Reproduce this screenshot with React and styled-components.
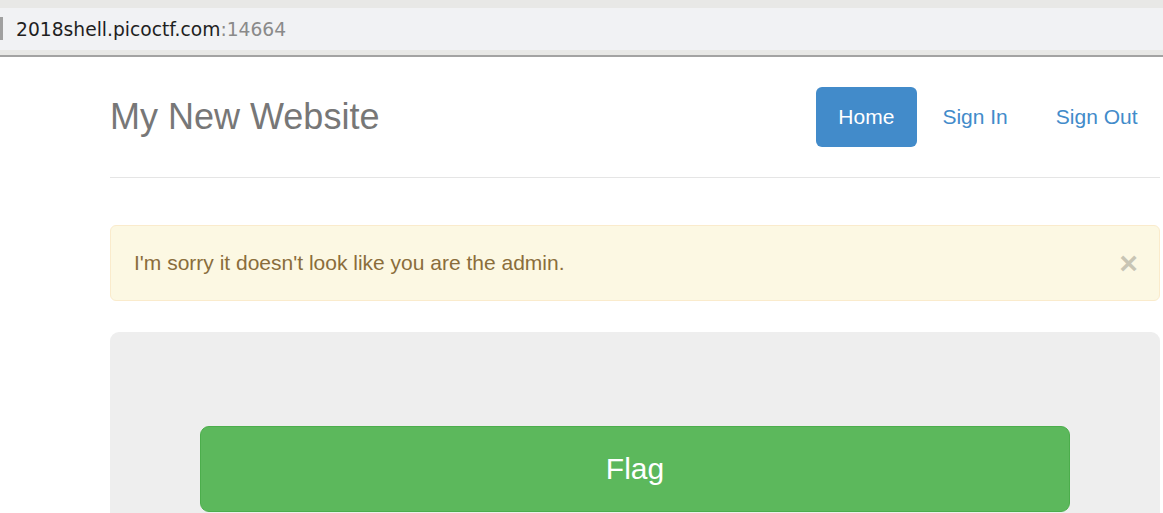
import { styled, createGlobalStyle } from 'styled-components'

const GlobalStyle = createGlobalStyle`
  html, body {
    margin: 0;
    padding: 0;
    background: #fff;
    overflow: hidden;
  }
  body {
    font-family: "Liberation Sans", Arial, sans-serif;
  }
`

const Chrome = styled.div`
  background: #e8e8e6;
  padding: 8px 0 5px;
  border-bottom: 2px solid #a3a3a3;
`

const UrlBar = styled.div`
  position: relative;
  height: 42px;
  background: #f1f2f4;
  display: flex;
  align-items: center;
  padding-left: 16px;
  font-family: "DejaVu Sans", "Noto Sans", sans-serif;
  font-size: 18.7px;
  color: #1f1f1f;
`

const Caret = styled.span`
  position: absolute;
  left: 0;
  top: 9px;
  width: 3px;
  height: 23px;
  background: #a0a0a0;
`

const Port = styled.span`
  color: #8a8a8a;
`

const Container = styled.div`
  width: 1050px;
  margin-left: 110px;
`

const Header = styled.div`
  display: flex;
  justify-content: space-between;
  align-items: center;
  padding: 30px 0 30px;
  border-bottom: 1.5px solid #e5e5e5;
  margin-bottom: 47px;
`

const Title = styled.h3`
  margin: 0;
  font-size: 36px;
  font-weight: 400;
  line-height: 60px;
  color: #777;
`

const Nav = styled.ul`
  display: flex;
  gap: 3px;
  list-style: none;
  margin: 0;
  padding: 0;
`

const Pill = styled.li`
  padding: 15px 22.5px;
  font-size: 21px;
  line-height: 30px;
  border-radius: 6px;
  color: ${p => (p.$active ? '#fff' : '#428bca')};
  background: ${p => (p.$active ? '#428bca' : 'transparent')};
  cursor: pointer;
`

const Alert = styled.div`
  display: flex;
  justify-content: space-between;
  align-items: center;
  padding: 22px 22px 22px 23px;
  background: #fcf8e3;
  border: 1px solid #faebcc;
  border-radius: 6px;
  color: #8a6d3b;
  font-size: 21px;
  line-height: 30px;
  margin-bottom: 31px;
`

const Close = styled.span`
  font-size: 32px;
  font-weight: 700;
  line-height: 30px;
  color: #000;
  opacity: 0.2;
  text-shadow: 0 1px 0 #fff;
  margin-right: -1px;
  cursor: pointer;
`

const Jumbotron = styled.div`
  background: #eee;
  border-radius: 9px;
  padding: 94px 0 60px;
  display: flex;
  justify-content: center;
`

const FlagButton = styled.button`
  width: 870px;
  height: 86px;
  background: #5cb85c;
  border: 1.5px solid #4cae4c;
  border-radius: 9px;
  color: #fff;
  font-family: "Liberation Sans", Arial, sans-serif;
  font-size: 30px;
  cursor: pointer;
`

export default function App() {
  return (
    <>
      <GlobalStyle />
      <Chrome>
        <UrlBar>
          <Caret />
          2018shell.picoctf.com<Port>:14664</Port>
        </UrlBar>
      </Chrome>
      <Container>
        <Header>
          <Title>My New Website</Title>
          <Nav>
            <Pill $active>Home</Pill>
            <Pill>Sign In</Pill>
            <Pill>Sign Out</Pill>
          </Nav>
        </Header>
        <Alert>
          I'm sorry it doesn't look like you are the admin.
          <Close>×</Close>
        </Alert>
        <Jumbotron>
          <FlagButton>Flag</FlagButton>
        </Jumbotron>
      </Container>
    </>
  )
}
